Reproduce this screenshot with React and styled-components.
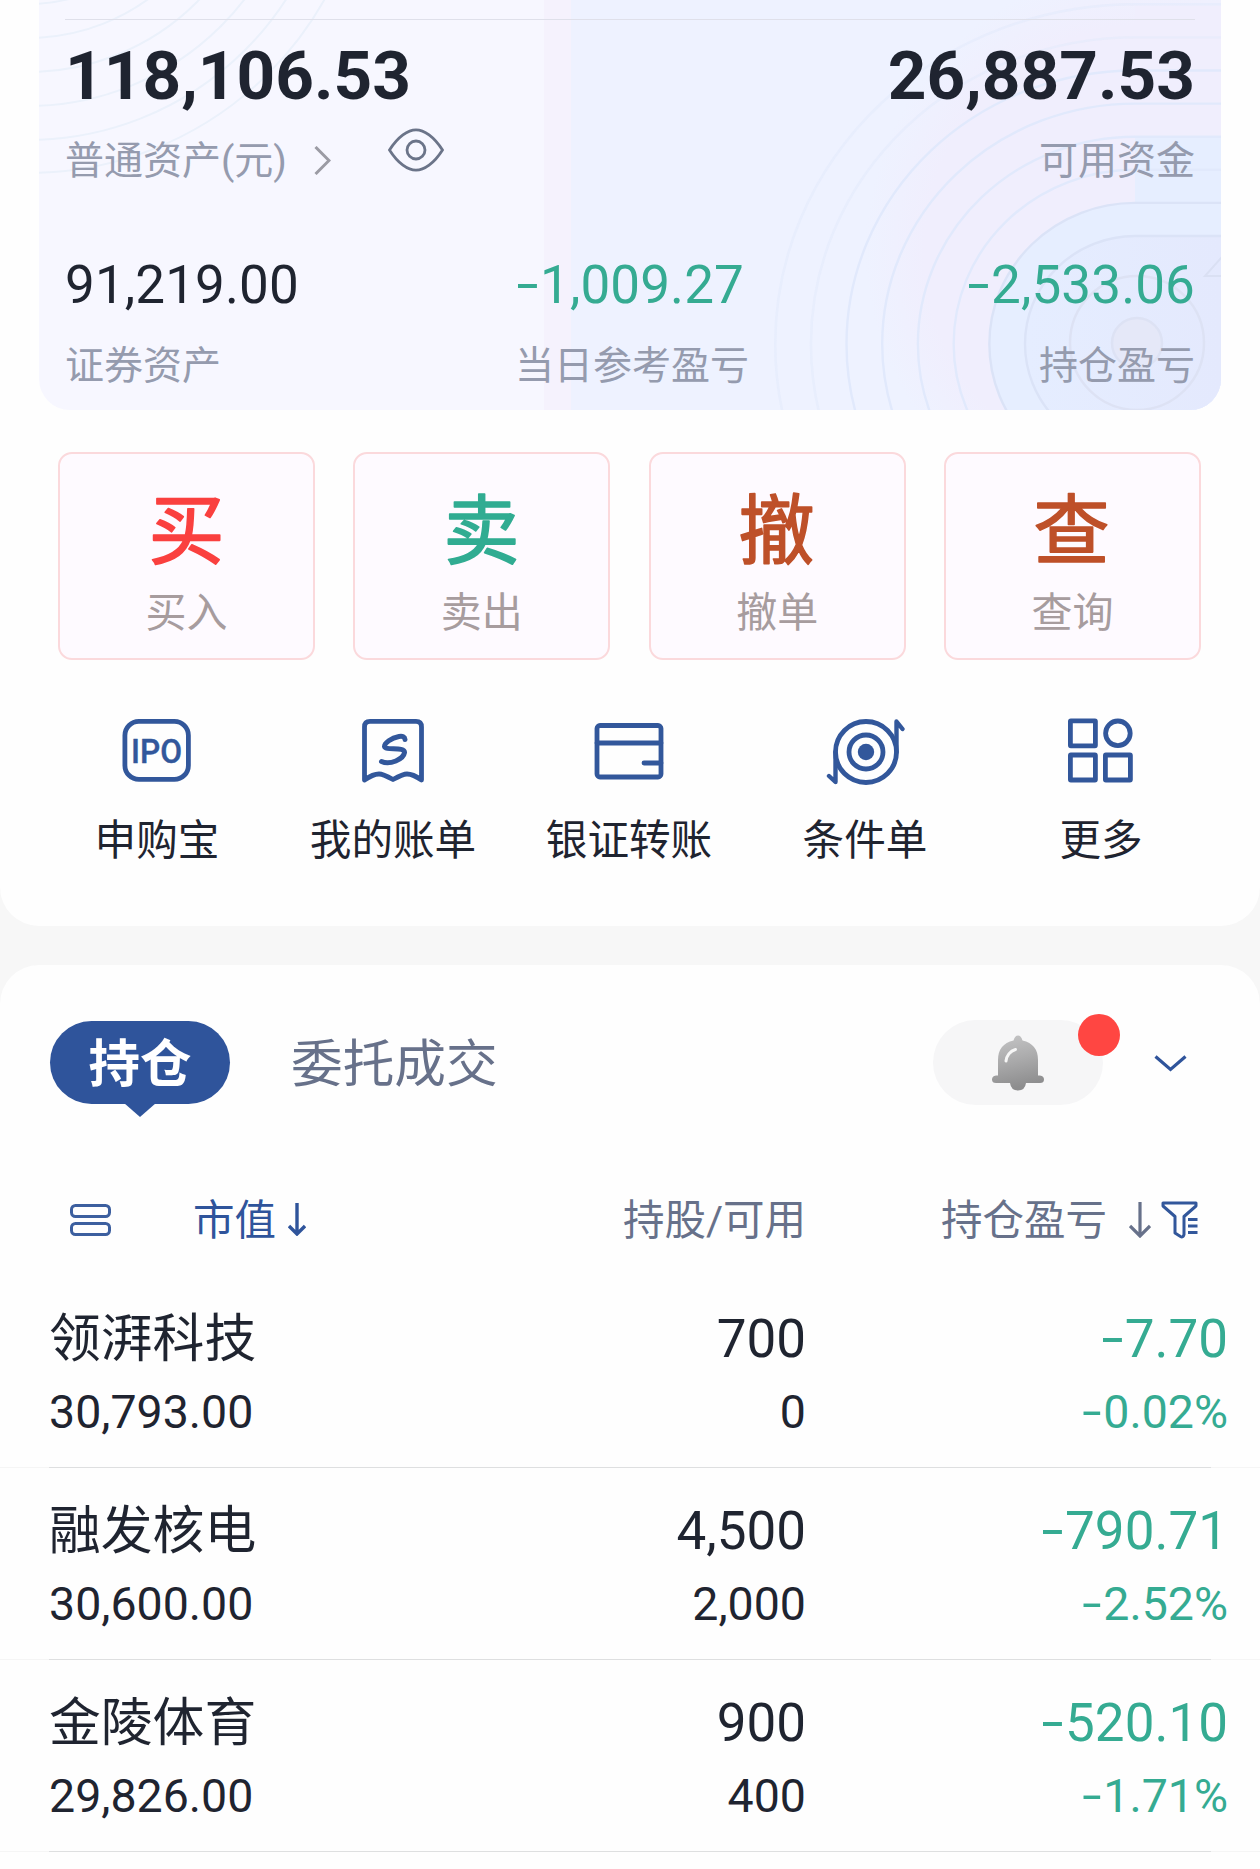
import React from "react";
import styled, { createGlobalStyle } from "styled-components";

const GlobalStyle = createGlobalStyle`
  * {
    box-sizing: border-box;
  }

  body {
    margin: 0;
    background-color: #f7f7f7;
    color: #1f2430;
    font-family: Roboto, "Noto Sans CJK SC", sans-serif;
  }
`;

const Page = styled.div`
  display: flex;
  flex-direction: column;
  gap: 39px;
  width: 1260px;
  height: 1869px;
  overflow: hidden;
`;

const AccountPanel = styled.section`
  height: 926px;
  flex-shrink: 0;
  background-color: #fefefe;
  border-radius: 0 0 39px 39px;
`;

const AssetCard = styled.div`
  position: relative;
  height: 410px;
  margin: 0 39px;
  padding: 19px 26px 0;
  border-radius: 0 0 31px 31px;
  background: linear-gradient(
    90deg,
    #f7f7ff 0 505px,
    #f5f2fd 505px 532px,
    #eef2ff 532px
  );
  overflow: hidden;
`;

const CardPattern = styled.svg`
  position: absolute;
  top: 0;
  left: 0;
`;

const CardContent = styled.div`
  position: relative;
  border-top: 1px solid #dfe0ea;
  padding-top: 21px;
`;

const Between = styled.div`
  display: flex;
  justify-content: space-between;
`;

const Total = styled.div`
  height: 70px;
  line-height: 70px;
  font-size: 67.5px;
  font-weight: 700;
`;

const Caption = styled.div`
  display: flex;
  align-items: center;
  height: 50px;
  line-height: 50px;
  font-size: 39px;
  color: #959bae;
`;

const TotalsCaption = styled(Between)`
  margin-top: 25px;
`;

const ArrowRight = styled.svg`
  margin: -2px 0 0 27px;
`;

const Eye = styled.svg`
  margin: -22px 0 0 57px;
`;

const Stats = styled.div`
  display: grid;
  grid-template-columns: 450px 1fr auto;
  margin-top: 69px;
`;

const Stat = styled.div`
  display: flex;
  flex-direction: column;
  align-items: ${(props) => (props.$right ? "flex-end" : "flex-start")};
`;

const StatValue = styled.div`
  height: 60px;
  margin-bottom: 26px;
  line-height: 60px;
  font-size: 53px;
  letter-spacing: 0.1px;
  color: ${(props) => (props.$down ? "#35ab92" : "inherit")};
`;

const Minus = styled.span`
  display: inline-block;
  width: ${(props) => (props.$small ? "22px" : "25px")};
  text-align: center;
  transform: scaleX(1.5) translateY(-1px);
`;

const Trades = styled.div`
  display: flex;
  justify-content: space-between;
  margin: 42px 59px 0 58px;
`;

const TradeButton = styled.button`
  display: flex;
  flex-direction: column;
  align-items: center;
  width: 257px;
  height: 208px;
  padding: 13px 0 0;
  border: 2px solid #fbd9dc;
  border-radius: 14px;
  background-color: #fefaff;
  color: #a79c9e;
  font-family: inherit;
  font-size: 41px;
  line-height: 50px;
`;

const TradeGlyph = styled.svg`
  flex-shrink: 0;
  margin-bottom: 5px;
  fill: ${(props) => props.$color};
  stroke: ${(props) => props.$color};
  stroke-width: 1.6;
  stroke-linejoin: round;
  font-family: "Noto Sans CJK SC", sans-serif;
  font-size: 76px;
`;

const Shortcuts = styled.div`
  display: grid;
  grid-template-columns: repeat(5, 236px);
  margin: 55px 0 0 39px;
`;

const Shortcut = styled.div`
  display: flex;
  flex-direction: column;
  align-items: center;
  gap: 31px;
  font-size: 41.6px;
  line-height: 50px;
`;

const LineIcon = styled.svg`
  fill: none;
  stroke: #32579b;
  stroke-width: 4.8;
  stroke-linecap: round;
  stroke-linejoin: round;

  text {
    fill: #32579b;
    stroke: #32579b;
    stroke-width: 0.4;
  }
`;

const HoldingsPanel = styled.section`
  flex: 1;
  padding-top: 55px;
  background-color: #fefefe;
  border-radius: 39px 39px 0 0;
`;

const Tabs = styled.div`
  display: flex;
  align-items: center;
  height: 85px;
  padding: 0 73px 0 50px;
`;

const ActiveTab = styled.div`
  position: relative;
  width: 180px;
  height: 83px;
  border-radius: 42px;
  background-color: #2f549b;
  color: #fff;
  font-size: 51.5px;
  font-weight: 700;
  line-height: 87px;
  text-align: center;

  &::after {
    content: "";
    position: absolute;
    top: 82px;
    left: 74px;
    border: 16px solid transparent;
    border-top: 14px solid #2f549b;
    border-bottom: 0;
  }
`;

const Tab = styled.div`
  margin-left: 61px;
  padding-top: 4px;
  color: #67718a;
  font-size: 51.7px;
  line-height: 84px;
`;

const BellPill = styled.div`
  position: relative;
  display: flex;
  justify-content: center;
  align-items: center;
  width: 170px;
  height: 85px;
  margin: 0 51px 0 auto;
  border-radius: 43px;
  background-color: #f6f6f7;
`;

const RedDot = styled.span`
  position: absolute;
  top: -6px;
  right: -17px;
  width: 42px;
  height: 42px;
  border-radius: 50%;
  background-color: #ff4642;
`;

const TabsToggle = styled.svg`
  margin-top: 2px;
`;

const HeaderRow = styled.div`
  display: grid;
  grid-template-columns: 123px 350px 263px 1fr;
  align-items: center;
  height: 60px;
  margin-top: 83px;
  padding: 0 62px 0 70px;
  color: #67718a;
  font-size: 41.5px;
  line-height: 60px;
`;

const HeaderCell = styled.div`
  display: flex;
  align-items: center;
  justify-content: ${(props) => (props.$right ? "flex-end" : "flex-start")};
  color: ${(props) => (props.$active ? "#2f549b" : "inherit")};
  white-space: nowrap;
`;

const HeaderLabel = styled.span`
  padding-top: 3px;
`;

const SortArrow = styled.svg`
  margin: 0 ${(props) => props.$after || "0"} 0 ${(props) => props.$before};
`;

const HoldingList = styled.div`
  margin-top: 28px;
`;

const Holding = styled.div`
  display: grid;
  grid-template-columns: 1fr 400px 422px;
  height: 192px;
  padding: 33px 32px 0 49px;
  background: linear-gradient(
      90deg,
      #f5f5f5 49px,
      #dedfe0 49px 1211px,
      #f5f5f5 1211px
    )
    bottom / 100% 1px no-repeat;
`;

const HoldingCell = styled.div`
  text-align: ${(props) => (props.$right ? "right" : "left")};
  color: ${(props) => (props.$down ? "#35ab92" : "inherit")};
`;

const Primary = styled.div`
  height: 60px;
  line-height: ${(props) => (props.$name ? "62px" : "60px")};
  font-size: ${(props) => (props.$name ? "51.8px" : "53px")};
`;

const Secondary = styled.div`
  height: 60px;
  margin-top: 13px;
  line-height: 60px;
  font-size: 46.5px;
`;

const trades = [
  { glyph: "买", label: "买入", color: "#fa403f" },
  { glyph: "卖", label: "卖出", color: "#31ac92" },
  { glyph: "撤", label: "撤单", color: "#be5029" },
  { glyph: "查", label: "查询", color: "#be5029" },
];

const holdings = [
  {
    name: "领湃科技",
    value: "30,793.00",
    shares: "700",
    available: "0",
    profit: "7.70",
    rate: "0.02%",
  },
  {
    name: "融发核电",
    value: "30,600.00",
    shares: "4,500",
    available: "2,000",
    profit: "790.71",
    rate: "2.52%",
  },
  {
    name: "金陵体育",
    value: "29,826.00",
    shares: "900",
    available: "400",
    profit: "520.10",
    rate: "1.71%",
  },
];

const Pattern = () => (
  <CardPattern width="1182" height="410" viewBox="39 0 1182 410" fill="none">
    <defs>
      <radialGradient
        id="glow"
        gradientUnits="userSpaceOnUse"
        cx="1150"
        cy="250"
        r="300"
      >
        <stop offset="0.75" stopColor="#f0eefd" />
        <stop offset="0.95" stopColor="#f0eefd" stopOpacity="0" />
      </radialGradient>
      <linearGradient id="inner" x1="0" y1="0" x2="1" y2="0">
        <stop offset="0" stopColor="#e5edff" />
        <stop offset="1" stopColor="#e4e9fd" />
      </linearGradient>
    </defs>
    {[171, 205, 239, 273, 307, 340].map((r) => (
      <circle key={r} cx="28" cy="-167" r={r} stroke="#ebf1fb" strokeWidth="2" />
    ))}
    <rect x="800" width="421" height="410" fill="url(#glow)" />
    <path d="M1135 6H1221V137H1135Z" fill="#f0eefd" />
    <path d="M1135 137H1221V210H1135Z" fill="#e6eeff" />
    <path d="M1221 203H1135A146 141 0 0 0 1135 485H1221Z" fill="#e6eeff" />
    <path d="M1221 236H1135A110 108 0 0 0 1135 452H1221Z" fill="url(#inner)" />
    {[0, 1, 2, 3, 4, 5, 6, 7].map((k) => {
      const rx = 110 + 35.7 * k;
      const ry = 108 + 33.1 * k;
      return (
        <path
          key={k}
          d={`M1225 ${344 - ry}H1135A${rx} ${ry} 0 0 0 1135 ${344 + ry}`}
          stroke={k < 2 ? "#dbe3f7" : "#e1e9fc"}
          strokeOpacity={k > 5 ? 0.5 : 1}
          strokeWidth="2.4"
        />
      );
    })}
    <circle cx="1137" cy="343" r="67" stroke="#dde2f4" strokeWidth="2.5" />
    <circle
      cx="1137"
      cy="343"
      r="25"
      fill="#e5e8f8"
      stroke="#dde2f4"
      strokeWidth="2.5"
    />
    <path d="M1222 257L1205 276H1222" stroke="#dae0f3" strokeWidth="2" />
  </CardPattern>
);

const DownArrow = ({ size = 36, ...rest }) => (
  <SortArrow
    width="22"
    height={size}
    viewBox={`0 0 22 ${size}`}
    fill="none"
    stroke="currentColor"
    strokeWidth="3.2"
    {...rest}
  >
    <path d={`M11 0V${size - 2}M1 ${size - 12}L11 ${size - 2}L21 ${size - 12}`} />
  </SortArrow>
);

const ShortDownArrow = () => (
  <SortArrow
    width="18"
    height="33"
    viewBox="0 0 18 33"
    fill="none"
    stroke="currentColor"
    strokeWidth="3.4"
    $before="12px"
  >
    <path d="M9 0V31M1 23L9 31L17 23" />
  </SortArrow>
);

const IpoIcon = () => (
  <LineIcon width="80" height="70" viewBox="0 0 80 70">
    <rect x="7.9" y="6.4" width="63.5" height="58" rx="14" />
    <text
      x="39.5"
      y="47.5"
      fontSize="34"
      fontWeight="500"
      textAnchor="middle"
      textLength="51"
      lengthAdjust="spacingAndGlyphs"
    >
      IPO
    </text>
  </LineIcon>
);

const BillIcon = () => (
  <LineIcon width="80" height="70" viewBox="0 0 80 70">
    <path d="M11.5 65V12Q11.5 6.4 17 6.4H63Q68.5 6.4 68.5 12V65Q60 59 54 59Q50 59 40 64.5Q30 59 26 59Q20 59 11.5 65Z" />
    <path
      strokeWidth="5"
      d="M52 24.5Q51.5 20.5 46 21.5C38 23 31.5 28 31.5 31.5C32 36 52 31 51.5 37.5C50.5 44 37 50.5 28.5 46.5"
    />
  </LineIcon>
);

const TransferIcon = () => (
  <LineIcon width="80" height="70" viewBox="0 0 80 70">
    <rect x="8" y="10.5" width="64" height="51.5" rx="3" />
    <path d="M8 28H72M55 48H72" />
  </LineIcon>
);

const TargetIcon = () => (
  <LineIcon width="80" height="70" viewBox="0 0 80 70">
    <circle cx="41" cy="37" r="30.5" />
    <circle cx="41" cy="37" r="17" />
    <circle cx="41" cy="37" r="8.2" fill="#32579b" stroke="none" />
    <path strokeWidth="4.4" d="M71.5 37V6.5L77.5 14M10.5 37V67L4 61" />
  </LineIcon>
);

const MoreIcon = () => (
  <LineIcon width="80" height="70" viewBox="0 0 80 70">
    <rect x="9.4" y="5.8" width="25" height="25" rx="0.5" />
    <circle cx="56.9" cy="18.3" r="12.3" />
    <rect x="9.4" y="40" width="25" height="25" rx="0.5" />
    <rect x="44.4" y="40" width="25" height="25" rx="0.5" />
  </LineIcon>
);

const shortcuts = [
  { icon: IpoIcon, label: "申购宝" },
  { icon: BillIcon, label: "我的账单" },
  { icon: TransferIcon, label: "银证转账" },
  { icon: TargetIcon, label: "条件单" },
  { icon: MoreIcon, label: "更多" },
];

const BellIcon = () => (
  <svg width="54" height="56" viewBox="0 0 54 56">
    <defs>
      <linearGradient id="bell" x1="0" y1="0" x2="0.2" y2="1">
        <stop offset="0" stopColor="#c6c6c7" />
        <stop offset="0.5" stopColor="#ababac" />
        <stop offset="1" stopColor="#8d8d8e" />
      </linearGradient>
    </defs>
    <path
      fill="url(#bell)"
      d="M27 0.5Q30 0.5 31.5 5.5Q47 9 47 25V40.5H49Q53 41 53 44.5Q53 48 49 48H35Q34 55.5 27 55.5Q20 55.5 19 48H5Q1 48 1 44.5Q1 41 5 40.5H7V25Q7 9 22.5 5.5Q24 0.5 27 0.5Z"
    />
    <path
      d="M15 26C15.5 21 19 16 24.5 14.5"
      fill="none"
      stroke="#f6f6f6"
      strokeWidth="3"
      strokeLinecap="round"
    />
  </svg>
);

const App = () => {
  return (
    <Page>
      <GlobalStyle />
      <AccountPanel>
        <AssetCard>
          <Pattern />
          <CardContent>
            <Between>
              <Total>118,106.53</Total>
              <Total>26,887.53</Total>
            </Between>
            <TotalsCaption>
              <Caption>
                普通资产(元)
                <ArrowRight width="17" height="29" viewBox="0 0 17 29">
                  <path
                    d="M1.5 1L15 14.5L1.5 28"
                    fill="none"
                    stroke="#9b9ba4"
                    strokeWidth="3"
                  />
                </ArrowRight>
                <Eye
                  width="56"
                  height="44"
                  viewBox="0 0 56 44"
                  fill="none"
                  stroke="#6b7489"
                  strokeWidth="2.8"
                >
                  <path d="M1.5 22C10 8.5 20 1.8 28 1.8S46 8.5 54.5 22C46 35.5 36 42.2 28 42.2S10 35.5 1.5 22Z" />
                  <circle cx="28" cy="22" r="9" />
                </Eye>
              </Caption>
              <Caption>可用资金</Caption>
            </TotalsCaption>
            <Stats>
              <Stat>
                <StatValue>91,219.00</StatValue>
                <Caption>证券资产</Caption>
              </Stat>
              <Stat>
                <StatValue $down>
                  <Minus>-</Minus>1,009.27
                </StatValue>
                <Caption>当日参考盈亏</Caption>
              </Stat>
              <Stat $right>
                <StatValue $down>
                  <Minus>-</Minus>2,533.06
                </StatValue>
                <Caption>持仓盈亏</Caption>
              </Stat>
            </Stats>
          </CardContent>
        </AssetCard>

        <Trades>
          {trades.map((trade) => (
            <TradeButton key={trade.label}>
              <TradeGlyph width="120" height="116" $color={trade.color}>
                <text x="59.5" y="90.5" textAnchor="middle">
                  {trade.glyph}
                </text>
              </TradeGlyph>
              {trade.label}
            </TradeButton>
          ))}
        </Trades>

        <Shortcuts>
          {shortcuts.map(({ icon: Icon, label }) => (
            <Shortcut key={label}>
              <Icon />
              {label}
            </Shortcut>
          ))}
        </Shortcuts>
      </AccountPanel>

      <HoldingsPanel>
        <Tabs>
          <ActiveTab>持仓</ActiveTab>
          <Tab>委托成交</Tab>
          <BellPill>
            <BellIcon />
            <RedDot />
          </BellPill>
          <TabsToggle width="33" height="17" viewBox="0 0 33 17">
            <path
              d="M1.5 1.5L16.5 14.5L31.5 1.5"
              fill="none"
              stroke="#2f549b"
              strokeWidth="3.2"
            />
          </TabsToggle>
        </Tabs>

        <HeaderRow>
          <svg width="41" height="32" viewBox="0 0 41 32">
            <g fill="none" stroke="#3c5f9f" strokeWidth="3">
              <rect x="1.5" y="1.5" width="38" height="11" rx="4" />
              <rect x="1.5" y="19.5" width="38" height="11" rx="4" />
            </g>
          </svg>
          <HeaderCell $active>
            <HeaderLabel>市值</HeaderLabel>
            <ShortDownArrow />
          </HeaderCell>
          <HeaderCell $right>
            <HeaderLabel>持股/可用</HeaderLabel>
          </HeaderCell>
          <HeaderCell $right>
            <HeaderLabel>持仓盈亏</HeaderLabel>
            <DownArrow $before="22px" $after="10px" />
            <svg width="37" height="38" viewBox="0 0 37 38">
              <g fill="none" stroke="#32579b" strokeWidth="3">
                <path
                  strokeLinejoin="round"
                  d="M2 2H35V5L23 15.5V33.5Q22 37 19.5 35.5L14 32V15.5L2 5Z"
                />
                <path d="M27 18.5H36.5M27 25H36.5M27 31.5H36.5" />
              </g>
            </svg>
          </HeaderCell>
        </HeaderRow>

        <HoldingList>
          {holdings.map((item) => (
            <Holding key={item.name}>
              <HoldingCell>
                <Primary $name>{item.name}</Primary>
                <Secondary>{item.value}</Secondary>
              </HoldingCell>
              <HoldingCell $right>
                <Primary>{item.shares}</Primary>
                <Secondary>{item.available}</Secondary>
              </HoldingCell>
              <HoldingCell $right $down>
                <Primary>
                  <Minus>-</Minus>
                  {item.profit}
                </Primary>
                <Secondary>
                  <Minus $small>-</Minus>
                  {item.rate}
                </Secondary>
              </HoldingCell>
            </Holding>
          ))}
        </HoldingList>
      </HoldingsPanel>
    </Page>
  );
};

export default App;
